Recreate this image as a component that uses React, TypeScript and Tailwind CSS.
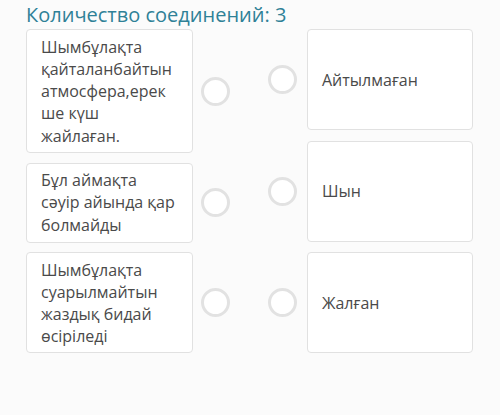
const font = { fontFamily: '"Open Sans", "Noto Sans", sans-serif' };

const leftItems = [
  { lines: ["Шымбұлақта", "қайталанбайтын", "атмосфера,ерек", "ше күш", "жайлаған."], h: "h-[124px]" },
  { lines: ["Бұл аймақта", "сәуір айында қар", "болмайды"], h: "h-[80px]" },
  { lines: ["Шымбұлақта", "суарылмайтын", "жаздық бидай", "өсіріледі"], h: "h-[101px]" },
];

const rightItems = ["Айтылмаған", "Шын", "Жалған"];

function Dot() {
  return <span className="block h-[29px] w-[29px] shrink-0 rounded-full border-[3px] border-[#e2e2e2] bg-white" />;
}

export default function App() {
  return (
    <div className="h-[415px] w-[500px] bg-[#fbfbfb] pl-[26px]" style={font}>
      <h2 className="pt-[2px] text-[20px] leading-[26px] text-[#2f8197]">Количество соединений: 3</h2>
      <div className="mt-px flex">
        <div className="flex flex-col gap-[9.5px]">
          {leftItems.map((item, i) => (
            <div key={i} className="flex items-center">
              <div
                className={`${item.h} w-[167px] rounded border border-[#e1e1e1] bg-white px-[14px] pt-[5.5px] text-[16px] leading-[22.3px] text-[#4a4a4a]`}
              >
                {item.lines.map((l) => (
                  <span key={l} className="block whitespace-nowrap">
                    {l}
                  </span>
                ))}
              </div>
              <div className="ml-[8px]">
                <Dot />
              </div>
            </div>
          ))}
        </div>
        <div className="ml-[38px] flex flex-col gap-[10.5px]">
          {rightItems.map((t) => (
            <div key={t} className="flex items-center">
              <Dot />
              <div className="ml-[10px] flex h-[101px] w-[166px] items-center rounded border border-[#e1e1e1] bg-white pl-[14px] text-[16px] text-[#4a4a4a]">
                {t}
              </div>
            </div>
          ))}
        </div>
      </div>
    </div>
  );
}
